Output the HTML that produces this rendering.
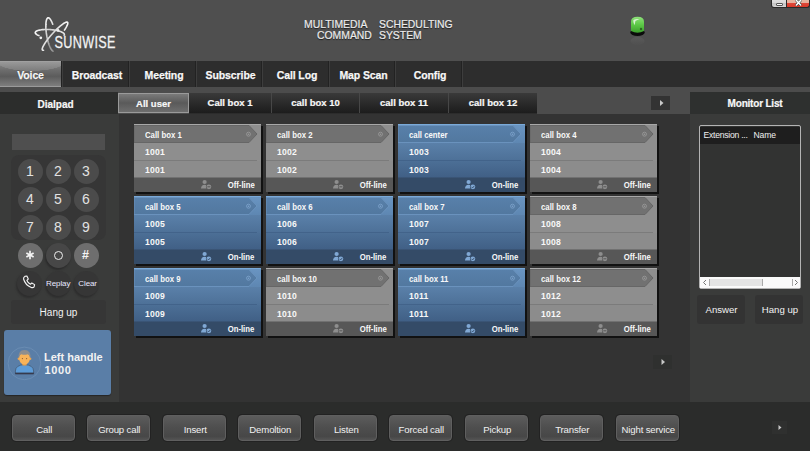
<!DOCTYPE html><html><head><meta charset="utf-8"><style>
*{margin:0;padding:0;box-sizing:border-box}
html,body{width:810px;height:451px;overflow:hidden;background:#333;font-family:"Liberation Sans",sans-serif;color:#f2f2f2}
.a{position:absolute}
#hdr{left:0;top:0;width:810px;height:61px;background:#4f4f4f}
#nav{left:0;top:61px;width:810px;height:26px;background:#2d2d2d;box-shadow:0 1px 0 #262626}
.tab{position:absolute;top:0;height:26px;font-size:10.5px;font-weight:bold;text-align:center;line-height:29px;padding-left:3px;color:#f8f8f8;letter-spacing:-0.1px;-webkit-text-stroke:0.25px #f8f8f8;text-shadow:0 0 1px #111}
.sep{position:absolute;top:0;width:2px;height:26px;border-left:1px solid #222;border-right:1px solid #3d3d3d}
#strip{left:0;top:87px;width:810px;height:5px;background:#4c4c4c}
#sub{left:0;top:92px;width:810px;height:22px;background:#4c4c4c}
#dialhdr{left:0;top:92px;width:118px;height:22px;background:#2c2d2c;font-size:10px;font-weight:bold;-webkit-text-stroke:0.2px #f8f8f8;color:#f8f8f8;text-align:center;line-height:25px;padding-right:7px}
#monhdr{left:690px;top:92px;width:120px;height:22px;background:#2e302f;font-size:10px;font-weight:bold;-webkit-text-stroke:0.2px #f8f8f8;color:#f8f8f8;text-align:center;line-height:24px;padding-left:10px;letter-spacing:-0.2px}
#left{left:0;top:114px;width:119px;height:288px;background:#3a3b3a}
#main{left:119px;top:114px;width:571px;height:288px;background:#333}
#right{left:690px;top:114px;width:120px;height:288px;background:#3a3b3a}
#bot{left:0;top:402px;width:810px;height:49px;background:#2b2c2b}
.stab{position:absolute;top:93px;height:20px;background:linear-gradient(#3a3a3a,#2f2f2f 35%,#262626 65%,#1d1d1d);font-size:9.5px;font-weight:bold;text-align:center;line-height:19px;-webkit-text-stroke:0.2px #f8f8f8;color:#f8f8f8}
.card{position:absolute;width:129px;height:70px}
.card .bd{position:absolute;left:0;top:0;width:127px;height:68px;box-shadow:2px 2px 0 #111}
.card svg{position:absolute;left:0;top:0}
.card .t{position:absolute;left:10.5px;font-size:8.4px;transform:scaleX(0.93);transform-origin:0 0;font-weight:bold;color:#f8f8f8;white-space:nowrap;}
.card .n{position:absolute;left:11px;font-size:8.6px;font-weight:bold;color:#f8f8f8;white-space:nowrap;letter-spacing:0.2px;}
.card .s{position:absolute;right:8.5px;top:56px;font-size:8.8px;transform:scaleX(0.88);transform-origin:100% 0;font-weight:bold;color:#f8f8f8;white-space:nowrap;}
.key{position:absolute;width:25px;height:25px;border-radius:50%;background:#4b4b4b;color:#e2e2e2;font-size:14px;text-align:center;line-height:24px}
.ttl{font-size:10.4px;color:#ececec;text-shadow:0 1px 1px #1a1a1a;white-space:nowrap;letter-spacing:0px;-webkit-text-stroke:0.2px #ececec}
.btn{position:absolute;top:415px;width:63px;height:26px;border-radius:4px;background:linear-gradient(#5c5c5c,#4f4f4f 45%,#474747 85%,#545454);border:1px solid #5f5f5f;font-size:9.6px;text-align:center;line-height:27.5px;color:#f0f0f0;box-shadow:0 0 0 1px #222;letter-spacing:-0.15px;padding-left:1.5px}
</style></head><body>
<div id="hdr" class="a"></div>
<svg class="a" style="left:0;top:0" width="130" height="60" viewBox="0 0 130 60">
<defs>
<linearGradient id="o1" gradientUnits="userSpaceOnUse" x1="46" y1="17" x2="60" y2="40"><stop offset="0" stop-color="#f6f6f6"/><stop offset="0.6" stop-color="#d0d0d0"/><stop offset="1" stop-color="#9a9a9a"/></linearGradient>
<linearGradient id="o2" gradientUnits="userSpaceOnUse" x1="35" y1="33" x2="64" y2="33"><stop offset="0" stop-color="#f8f8f8"/><stop offset="0.5" stop-color="#cfcfcf"/><stop offset="1" stop-color="#e8e8e8"/></linearGradient>
<linearGradient id="o3" gradientUnits="userSpaceOnUse" x1="68" y1="22" x2="42" y2="50"><stop offset="0" stop-color="#f8f8f8"/><stop offset="0.5" stop-color="#d8d8d8"/><stop offset="1" stop-color="#e8e8e8"/></linearGradient>
</defs>
<g fill="none" stroke-width="1.6" stroke-linecap="round">
<path d="M53.02,51.09 L52.64,50.88 L52.24,50.57 L51.84,50.15 L51.42,49.62 L51.01,48.99 L50.59,48.27 L50.18,47.45 L49.77,46.54 L49.36,45.55 L48.97,44.49 L48.59,43.36 L48.23,42.17 L47.89,40.93 L47.56,39.65 L47.26,38.33 L46.98,36.98 L46.73,35.62 L46.51,34.25 L46.31,32.89 L46.15,31.53 L46.02,30.19 L45.92,28.89 L45.86,27.62 L45.83,26.39 L45.83,25.22 L45.87,24.12 L45.94,23.08 L46.05,22.12 L46.18,21.25 L46.35,20.46 L46.55,19.77 L46.78,19.18 L47.04,18.69 L47.33,18.30 L47.63,18.03 L47.96,17.87 L48.31,17.82 L48.68,17.88 L49.06,18.05 L49.45,18.34 L49.86,18.73 L50.27,19.23 L50.69,19.83 L51.10,20.54 L51.52,21.33 L51.93,22.22 L52.33,23.18 L52.73,24.23" stroke="url(#o1)"/>
<path d="M38.95,35.57 L38.17,35.26 L37.48,34.94 L36.87,34.61 L36.35,34.27 L35.93,33.93 L35.60,33.58 L35.38,33.23 L35.26,32.89 L35.24,32.55 L35.32,32.22 L35.51,31.90 L35.80,31.59 L36.19,31.29 L36.67,31.01 L37.25,30.75 L37.91,30.51 L38.66,30.30 L39.49,30.10 L40.40,29.93 L41.36,29.79 L42.39,29.67 L43.47,29.58 L44.60,29.52 L45.76,29.49 L46.95,29.48 L48.17,29.51 L49.39,29.57 L50.61,29.65 L51.83,29.76 L53.04,29.90 L54.22,30.07 L55.38,30.26 L56.49,30.47 L57.55,30.71 L58.56,30.96 L59.51,31.24 L60.39,31.53 L61.19,31.84 L61.92,32.16 L62.55,32.49 L63.10,32.82 L63.55,33.17 L63.91,33.51 L64.16,33.86 L64.32,34.20 L64.37,34.54 L64.31,34.88 L64.16,35.20" stroke="url(#o2)"/>
<path d="M43.54,50.26 L43.07,50.30 L42.70,50.23 L42.43,50.04 L42.27,49.74 L42.20,49.33 L42.25,48.81 L42.39,48.19 L42.64,47.47 L43.00,46.66 L43.44,45.76 L43.99,44.78 L44.62,43.74 L45.34,42.63 L46.14,41.47 L47.01,40.27 L47.94,39.03 L48.94,37.77 L49.98,36.50 L51.06,35.22 L52.18,33.96 L53.32,32.71 L54.47,31.49 L55.63,30.31 L56.78,29.17 L57.91,28.10 L59.03,27.09 L60.11,26.15 L61.15,25.30 L62.14,24.53 L63.07,23.87 L63.93,23.30 L64.72,22.84 L65.43,22.48 L66.06,22.24 L66.60,22.12 L67.04,22.11 L67.38,22.21 L67.62,22.43 L67.76,22.76 L67.79,23.20 L67.72,23.75 L67.55,24.39 L67.27,25.14 L66.89,25.98 L66.42,26.89 L65.85,27.89 L65.19,28.95 L64.45,30.08" stroke="url(#o3)"/>
</g>
<circle cx="40.8" cy="37.8" r="1.4" fill="#f4f4f4"/><circle cx="58.1" cy="30.4" r="1.3" fill="#eee"/><circle cx="46" cy="24.6" r="1" fill="#ddd"/>
<g transform="translate(54.6 48) scale(0.8 1)"><text x="0" y="0" font-family="Liberation Sans" font-size="15.8" fill="#f4f4f4" stroke="#f4f4f4" stroke-width="0.25" textLength="76" lengthAdjust="spacing">SUNWISE</text></g>
</svg>
<div class="a ttl" style="left:304px;top:19.2px">MULTIMEDIA</div>
<div class="a ttl" style="left:379px;top:19.2px">SCHEDULTING</div>
<div class="a ttl" style="left:317px;top:30.2px">COMMAND</div>
<div class="a ttl" style="left:379px;top:30.2px">SYSTEM</div>
<svg class="a" style="left:626px;top:12px" width="24" height="36" viewBox="0 0 24 36">
<defs><linearGradient id="gl" x1="0" y1="0" x2="0" y2="1"><stop offset="0" stop-color="#8ee07a"/><stop offset="0.5" stop-color="#5cc846"/><stop offset="1" stop-color="#3c9e2c"/></linearGradient>
<linearGradient id="rf" x1="0" y1="0" x2="0" y2="1"><stop offset="0" stop-color="#5c5c5c"/><stop offset="1" stop-color="#505050"/></linearGradient></defs>
<ellipse cx="11.5" cy="20.5" rx="7.2" ry="3.4" fill="#0b0b0b"/>
<path d="M5,19 L5,9.5 Q5,4.8 11.5,4.8 Q18,4.8 18,9.5 L18,19 Q11.5,22.5 5,19 Z" fill="url(#gl)"/>
<path d="M7.2,8.6 Q8,7 11,7 L13.8,7.2 Q11,8 9.4,9 L8.6,13.2 Q7.4,11.2 7.2,8.6 Z" fill="#e6f5e0" opacity="0.9"/>
<circle cx="15" cy="17" r="1.2" fill="#2c6a22"/>
<ellipse cx="11.5" cy="29" rx="7" ry="4" fill="url(#rf)" opacity="0.8"/>
</svg>
<div class="a" style="left:771px;top:0;width:16px;height:8px;background:linear-gradient(#e0e0e0,#d8d8d8 45%,#c4c4c4 50%,#d6d6d6);border:1px solid #2a2a2a;border-top:0;border-radius:0 0 0 3px"></div>
<div class="a" style="left:775.5px;top:2.5px;width:7px;height:3px;background:#fafafa;border:1px solid #555;border-radius:1px"></div>
<div class="a" style="left:787px;top:0;width:23px;height:8px;background:linear-gradient(#e8b8a0,#e8b0a0 40%,#e04838 45%,#d83a2a);border:1px solid #2a2a2a;border-top:0;border-left:0;border-radius:0 0 3px 0"></div>
<svg class="a" style="left:787px;top:0" width="23" height="8"><path d="M9,0 L14,5.5 M14,0 L9,5.5" stroke="#1a3a3a" stroke-width="2.6"/><path d="M9,0 L14,5.5 M14,0 L9,5.5" stroke="#fff" stroke-width="1.6"/></svg>
<div id="nav" class="a">
<div class="tab" style="left:0px;width:62px;background:radial-gradient(34px 9px at 50% 0%,rgba(255,255,255,.12) 97%,transparent 100%),linear-gradient(#8a8a8a,#6c6c6c 35%,#5c5c5c 60%,#7e7e7e);border-top:1px solid #a0a0a0;border-bottom:1px solid #9a9a9a;line-height:27px;padding-left:0;padding-right:1px">Voice</div>
<div class="tab" style="left:62px;width:67px">Broadcast</div>
<div class="sep" style="left:61px"></div>
<div class="tab" style="left:129px;width:67px">Meeting</div>
<div class="sep" style="left:128px"></div>
<div class="tab" style="left:196px;width:66px">Subscribe</div>
<div class="sep" style="left:195px"></div>
<div class="tab" style="left:262px;width:67px">Call Log</div>
<div class="sep" style="left:261px"></div>
<div class="tab" style="left:329px;width:66px">Map Scan</div>
<div class="sep" style="left:328px"></div>
<div class="tab" style="left:395px;width:67px">Config</div>
<div class="sep" style="left:394px"></div>
<div class="sep" style="left:461px"></div>
</div>
<div id="strip" class="a"></div>
<div id="sub" class="a"></div>
<div id="dialhdr" class="a">Dialpad</div>
<div id="monhdr" class="a">Monitor List</div>
<div id="left" class="a"></div>
<div id="main" class="a"></div>
<div id="right" class="a"></div>
<div id="bot" class="a"></div>
<div class="stab" style="left:118px;width:71px;background:linear-gradient(#7a7a7a,#5a5a5a 50%,#6e6e6e);border:1px solid #9a9a9a">All user</div>
<div class="a" style="left:189px;top:93px;width:348px;height:21px;background:#2c2c2c"></div>
<div class="stab" style="left:189px;width:82px">Call box 1</div>
<div class="stab" style="left:272px;width:87px">call box 10</div>
<div class="stab" style="left:360px;width:88px">call box 11</div>
<div class="stab" style="left:449px;width:88px">call box 12</div>
<div class="a" style="left:271px;top:93px;width:1px;height:20px;background:#474747"></div>
<div class="a" style="left:359px;top:93px;width:1px;height:20px;background:#474747"></div>
<div class="a" style="left:448px;top:93px;width:1px;height:20px;background:#474747"></div>
<div class="a" style="left:651px;top:96px;width:19px;height:14px;background:#333"></div>
<svg class="a" style="left:651px;top:96px" width="19" height="14"><path d="M9,4 L12.5,7 L9,10 Z" fill="#c8c8c8"/></svg>
<svg width="0" height="0" style="position:absolute"><defs>
<linearGradient id="bh" x1="0" y1="0" x2="0" y2="1"><stop offset="0" stop-color="#6a95c2"/><stop offset="1" stop-color="#5e87b2"/></linearGradient>
<linearGradient id="ba" x1="0" y1="0" x2="0" y2="1"><stop offset="0" stop-color="#5880aa"/><stop offset="1" stop-color="#52789f"/></linearGradient>
<linearGradient id="br1" x1="0" y1="0" x2="0" y2="1"><stop offset="0" stop-color="#5a80a9"/><stop offset="1" stop-color="#4d7097"/></linearGradient>
<linearGradient id="br2" x1="0" y1="0" x2="0" y2="1"><stop offset="0" stop-color="#4c6f96"/><stop offset="1" stop-color="#405f85"/></linearGradient>
</defs></svg>
<div class="card" style="left:134px;top:124px">
<div class="bd"></div>
<svg width="127" height="68" viewBox="0 0 127 68"><rect x="0" y="0" width="127" height="19" fill="#8e8e8e"/><rect x="0" y="19" width="127" height="18" fill="#8e8e8e"/><rect x="0" y="37" width="127" height="17" fill="#8c8c8c"/><rect x="0" y="0" width="127" height="1" fill="#a8a8a8"/><polygon points="0,1.5 115,1.5 123,10 115,18.5 0,18.5" fill="#717171" stroke="#666666" stroke-width="1"/><circle cx="114.5" cy="10.2" r="2" fill="none" stroke="#9a9a9a" stroke-width="0.8"/><circle cx="114.5" cy="10.2" r="0.8" fill="#9a9a9a"/><rect x="0" y="36" width="123" height="1" fill="#7b7b7b"/><rect x="0" y="53.5" width="127" height="14.5" fill="#575757"/><circle cx="70.6" cy="58" r="2.1" fill="#8e8e8e"/><path d="M67,64.6 Q67.2,60.8 70.6,60.8 Q73.4,60.8 74,62.5 L74,64.6 Z" fill="#8e8e8e"/><circle cx="74.9" cy="62.8" r="3" fill="#575757"/><circle cx="74.9" cy="62.8" r="2.4" fill="#8e8e8e"/><rect x="73.4" y="62.3" width="3" height="1" fill="#575757"/></svg>
<div class="t" style="top:5.5px">Call box 1</div>
<div class="n" style="top:23px">1001</div>
<div class="n" style="top:40.5px">1001</div>
<div class="s">Off-line</div>
</div>
<div class="card" style="left:266px;top:124px">
<div class="bd"></div>
<svg width="127" height="68" viewBox="0 0 127 68"><rect x="0" y="0" width="127" height="19" fill="#8e8e8e"/><rect x="0" y="19" width="127" height="18" fill="#8e8e8e"/><rect x="0" y="37" width="127" height="17" fill="#8c8c8c"/><rect x="0" y="0" width="127" height="1" fill="#a8a8a8"/><polygon points="0,1.5 115,1.5 123,10 115,18.5 0,18.5" fill="#717171" stroke="#666666" stroke-width="1"/><circle cx="114.5" cy="10.2" r="2" fill="none" stroke="#9a9a9a" stroke-width="0.8"/><circle cx="114.5" cy="10.2" r="0.8" fill="#9a9a9a"/><rect x="0" y="36" width="123" height="1" fill="#7b7b7b"/><rect x="0" y="53.5" width="127" height="14.5" fill="#575757"/><circle cx="70.6" cy="58" r="2.1" fill="#8e8e8e"/><path d="M67,64.6 Q67.2,60.8 70.6,60.8 Q73.4,60.8 74,62.5 L74,64.6 Z" fill="#8e8e8e"/><circle cx="74.9" cy="62.8" r="3" fill="#575757"/><circle cx="74.9" cy="62.8" r="2.4" fill="#8e8e8e"/><rect x="73.4" y="62.3" width="3" height="1" fill="#575757"/></svg>
<div class="t" style="top:5.5px">call box 2</div>
<div class="n" style="top:23px">1002</div>
<div class="n" style="top:40.5px">1002</div>
<div class="s">Off-line</div>
</div>
<div class="card" style="left:398px;top:124px">
<div class="bd"></div>
<svg width="127" height="68" viewBox="0 0 127 68"><rect x="0" y="0" width="127" height="19" fill="url(#bh)"/><rect x="0" y="19" width="127" height="18" fill="url(#br1)"/><rect x="0" y="37" width="127" height="17" fill="url(#br2)"/><rect x="0" y="0" width="127" height="1" fill="#7aaad9"/><polygon points="0,1.5 115,1.5 123,10 115,18.5 0,18.5" fill="url(#ba)" stroke="#6a92bd" stroke-width="1"/><circle cx="114.5" cy="10.2" r="2" fill="none" stroke="#7ea3cc" stroke-width="0.8"/><circle cx="114.5" cy="10.2" r="0.8" fill="#7ea3cc"/><rect x="0" y="36" width="123" height="1" fill="#42638a"/><rect x="0" y="53.5" width="127" height="14.5" fill="#344b67"/><circle cx="70.6" cy="58" r="2.1" fill="#80a8d4"/><path d="M67,64.6 Q67.2,60.8 70.6,60.8 Q73.4,60.8 74,62.5 L74,64.6 Z" fill="#80a8d4"/><circle cx="74.9" cy="62.8" r="3" fill="#344b67"/><circle cx="74.9" cy="62.8" r="2.4" fill="#80a8d4"/><path d="M73.5,62.8 L74.6,63.9 L76.4,61.8" fill="none" stroke="#344b67" stroke-width="0.9"/></svg>
<div class="t" style="top:5.5px">call center</div>
<div class="n" style="top:23px">1003</div>
<div class="n" style="top:40.5px">1003</div>
<div class="s">On-line</div>
</div>
<div class="card" style="left:530px;top:124px">
<div class="bd"></div>
<svg width="127" height="68" viewBox="0 0 127 68"><rect x="0" y="0" width="127" height="19" fill="#8e8e8e"/><rect x="0" y="19" width="127" height="18" fill="#8e8e8e"/><rect x="0" y="37" width="127" height="17" fill="#8c8c8c"/><rect x="0" y="0" width="127" height="1" fill="#a8a8a8"/><polygon points="0,1.5 115,1.5 123,10 115,18.5 0,18.5" fill="#717171" stroke="#666666" stroke-width="1"/><circle cx="114.5" cy="10.2" r="2" fill="none" stroke="#9a9a9a" stroke-width="0.8"/><circle cx="114.5" cy="10.2" r="0.8" fill="#9a9a9a"/><rect x="0" y="36" width="123" height="1" fill="#7b7b7b"/><rect x="0" y="53.5" width="127" height="14.5" fill="#575757"/><circle cx="70.6" cy="58" r="2.1" fill="#8e8e8e"/><path d="M67,64.6 Q67.2,60.8 70.6,60.8 Q73.4,60.8 74,62.5 L74,64.6 Z" fill="#8e8e8e"/><circle cx="74.9" cy="62.8" r="3" fill="#575757"/><circle cx="74.9" cy="62.8" r="2.4" fill="#8e8e8e"/><rect x="73.4" y="62.3" width="3" height="1" fill="#575757"/></svg>
<div class="t" style="top:5.5px">call box 4</div>
<div class="n" style="top:23px">1004</div>
<div class="n" style="top:40.5px">1004</div>
<div class="s">Off-line</div>
</div>
<div class="card" style="left:134px;top:196px">
<div class="bd"></div>
<svg width="127" height="68" viewBox="0 0 127 68"><rect x="0" y="0" width="127" height="19" fill="url(#bh)"/><rect x="0" y="19" width="127" height="18" fill="url(#br1)"/><rect x="0" y="37" width="127" height="17" fill="url(#br2)"/><rect x="0" y="0" width="127" height="1" fill="#7aaad9"/><polygon points="0,1.5 115,1.5 123,10 115,18.5 0,18.5" fill="url(#ba)" stroke="#6a92bd" stroke-width="1"/><circle cx="114.5" cy="10.2" r="2" fill="none" stroke="#7ea3cc" stroke-width="0.8"/><circle cx="114.5" cy="10.2" r="0.8" fill="#7ea3cc"/><rect x="0" y="36" width="123" height="1" fill="#42638a"/><rect x="0" y="53.5" width="127" height="14.5" fill="#344b67"/><circle cx="70.6" cy="58" r="2.1" fill="#80a8d4"/><path d="M67,64.6 Q67.2,60.8 70.6,60.8 Q73.4,60.8 74,62.5 L74,64.6 Z" fill="#80a8d4"/><circle cx="74.9" cy="62.8" r="3" fill="#344b67"/><circle cx="74.9" cy="62.8" r="2.4" fill="#80a8d4"/><path d="M73.5,62.8 L74.6,63.9 L76.4,61.8" fill="none" stroke="#344b67" stroke-width="0.9"/></svg>
<div class="t" style="top:5.5px">call box 5</div>
<div class="n" style="top:23px">1005</div>
<div class="n" style="top:40.5px">1005</div>
<div class="s">On-line</div>
</div>
<div class="card" style="left:266px;top:196px">
<div class="bd"></div>
<svg width="127" height="68" viewBox="0 0 127 68"><rect x="0" y="0" width="127" height="19" fill="url(#bh)"/><rect x="0" y="19" width="127" height="18" fill="url(#br1)"/><rect x="0" y="37" width="127" height="17" fill="url(#br2)"/><rect x="0" y="0" width="127" height="1" fill="#7aaad9"/><polygon points="0,1.5 115,1.5 123,10 115,18.5 0,18.5" fill="url(#ba)" stroke="#6a92bd" stroke-width="1"/><circle cx="114.5" cy="10.2" r="2" fill="none" stroke="#7ea3cc" stroke-width="0.8"/><circle cx="114.5" cy="10.2" r="0.8" fill="#7ea3cc"/><rect x="0" y="36" width="123" height="1" fill="#42638a"/><rect x="0" y="53.5" width="127" height="14.5" fill="#344b67"/><circle cx="70.6" cy="58" r="2.1" fill="#80a8d4"/><path d="M67,64.6 Q67.2,60.8 70.6,60.8 Q73.4,60.8 74,62.5 L74,64.6 Z" fill="#80a8d4"/><circle cx="74.9" cy="62.8" r="3" fill="#344b67"/><circle cx="74.9" cy="62.8" r="2.4" fill="#80a8d4"/><path d="M73.5,62.8 L74.6,63.9 L76.4,61.8" fill="none" stroke="#344b67" stroke-width="0.9"/></svg>
<div class="t" style="top:5.5px">call box 6</div>
<div class="n" style="top:23px">1006</div>
<div class="n" style="top:40.5px">1006</div>
<div class="s">On-line</div>
</div>
<div class="card" style="left:398px;top:196px">
<div class="bd"></div>
<svg width="127" height="68" viewBox="0 0 127 68"><rect x="0" y="0" width="127" height="19" fill="url(#bh)"/><rect x="0" y="19" width="127" height="18" fill="url(#br1)"/><rect x="0" y="37" width="127" height="17" fill="url(#br2)"/><rect x="0" y="0" width="127" height="1" fill="#7aaad9"/><polygon points="0,1.5 115,1.5 123,10 115,18.5 0,18.5" fill="url(#ba)" stroke="#6a92bd" stroke-width="1"/><circle cx="114.5" cy="10.2" r="2" fill="none" stroke="#7ea3cc" stroke-width="0.8"/><circle cx="114.5" cy="10.2" r="0.8" fill="#7ea3cc"/><rect x="0" y="36" width="123" height="1" fill="#42638a"/><rect x="0" y="53.5" width="127" height="14.5" fill="#344b67"/><circle cx="70.6" cy="58" r="2.1" fill="#80a8d4"/><path d="M67,64.6 Q67.2,60.8 70.6,60.8 Q73.4,60.8 74,62.5 L74,64.6 Z" fill="#80a8d4"/><circle cx="74.9" cy="62.8" r="3" fill="#344b67"/><circle cx="74.9" cy="62.8" r="2.4" fill="#80a8d4"/><path d="M73.5,62.8 L74.6,63.9 L76.4,61.8" fill="none" stroke="#344b67" stroke-width="0.9"/></svg>
<div class="t" style="top:5.5px">call box 7</div>
<div class="n" style="top:23px">1007</div>
<div class="n" style="top:40.5px">1007</div>
<div class="s">On-line</div>
</div>
<div class="card" style="left:530px;top:196px">
<div class="bd"></div>
<svg width="127" height="68" viewBox="0 0 127 68"><rect x="0" y="0" width="127" height="19" fill="#8e8e8e"/><rect x="0" y="19" width="127" height="18" fill="#8e8e8e"/><rect x="0" y="37" width="127" height="17" fill="#8c8c8c"/><rect x="0" y="0" width="127" height="1" fill="#a8a8a8"/><polygon points="0,1.5 115,1.5 123,10 115,18.5 0,18.5" fill="#717171" stroke="#666666" stroke-width="1"/><circle cx="114.5" cy="10.2" r="2" fill="none" stroke="#9a9a9a" stroke-width="0.8"/><circle cx="114.5" cy="10.2" r="0.8" fill="#9a9a9a"/><rect x="0" y="36" width="123" height="1" fill="#7b7b7b"/><rect x="0" y="53.5" width="127" height="14.5" fill="#575757"/><circle cx="70.6" cy="58" r="2.1" fill="#8e8e8e"/><path d="M67,64.6 Q67.2,60.8 70.6,60.8 Q73.4,60.8 74,62.5 L74,64.6 Z" fill="#8e8e8e"/><circle cx="74.9" cy="62.8" r="3" fill="#575757"/><circle cx="74.9" cy="62.8" r="2.4" fill="#8e8e8e"/><rect x="73.4" y="62.3" width="3" height="1" fill="#575757"/></svg>
<div class="t" style="top:5.5px">call box 8</div>
<div class="n" style="top:23px">1008</div>
<div class="n" style="top:40.5px">1008</div>
<div class="s">Off-line</div>
</div>
<div class="card" style="left:134px;top:268px">
<div class="bd"></div>
<svg width="127" height="68" viewBox="0 0 127 68"><rect x="0" y="0" width="127" height="19" fill="url(#bh)"/><rect x="0" y="19" width="127" height="18" fill="url(#br1)"/><rect x="0" y="37" width="127" height="17" fill="url(#br2)"/><rect x="0" y="0" width="127" height="1" fill="#7aaad9"/><polygon points="0,1.5 115,1.5 123,10 115,18.5 0,18.5" fill="url(#ba)" stroke="#6a92bd" stroke-width="1"/><circle cx="114.5" cy="10.2" r="2" fill="none" stroke="#7ea3cc" stroke-width="0.8"/><circle cx="114.5" cy="10.2" r="0.8" fill="#7ea3cc"/><rect x="0" y="36" width="123" height="1" fill="#42638a"/><rect x="0" y="53.5" width="127" height="14.5" fill="#344b67"/><circle cx="70.6" cy="58" r="2.1" fill="#80a8d4"/><path d="M67,64.6 Q67.2,60.8 70.6,60.8 Q73.4,60.8 74,62.5 L74,64.6 Z" fill="#80a8d4"/><circle cx="74.9" cy="62.8" r="3" fill="#344b67"/><circle cx="74.9" cy="62.8" r="2.4" fill="#80a8d4"/><path d="M73.5,62.8 L74.6,63.9 L76.4,61.8" fill="none" stroke="#344b67" stroke-width="0.9"/></svg>
<div class="t" style="top:5.5px">call box 9</div>
<div class="n" style="top:23px">1009</div>
<div class="n" style="top:40.5px">1009</div>
<div class="s">On-line</div>
</div>
<div class="card" style="left:266px;top:268px">
<div class="bd"></div>
<svg width="127" height="68" viewBox="0 0 127 68"><rect x="0" y="0" width="127" height="19" fill="#8e8e8e"/><rect x="0" y="19" width="127" height="18" fill="#8e8e8e"/><rect x="0" y="37" width="127" height="17" fill="#8c8c8c"/><rect x="0" y="0" width="127" height="1" fill="#a8a8a8"/><polygon points="0,1.5 115,1.5 123,10 115,18.5 0,18.5" fill="#717171" stroke="#666666" stroke-width="1"/><circle cx="114.5" cy="10.2" r="2" fill="none" stroke="#9a9a9a" stroke-width="0.8"/><circle cx="114.5" cy="10.2" r="0.8" fill="#9a9a9a"/><rect x="0" y="36" width="123" height="1" fill="#7b7b7b"/><rect x="0" y="53.5" width="127" height="14.5" fill="#575757"/><circle cx="70.6" cy="58" r="2.1" fill="#8e8e8e"/><path d="M67,64.6 Q67.2,60.8 70.6,60.8 Q73.4,60.8 74,62.5 L74,64.6 Z" fill="#8e8e8e"/><circle cx="74.9" cy="62.8" r="3" fill="#575757"/><circle cx="74.9" cy="62.8" r="2.4" fill="#8e8e8e"/><rect x="73.4" y="62.3" width="3" height="1" fill="#575757"/></svg>
<div class="t" style="top:5.5px">call box 10</div>
<div class="n" style="top:23px">1010</div>
<div class="n" style="top:40.5px">1010</div>
<div class="s">Off-line</div>
</div>
<div class="card" style="left:398px;top:268px">
<div class="bd"></div>
<svg width="127" height="68" viewBox="0 0 127 68"><rect x="0" y="0" width="127" height="19" fill="url(#bh)"/><rect x="0" y="19" width="127" height="18" fill="url(#br1)"/><rect x="0" y="37" width="127" height="17" fill="url(#br2)"/><rect x="0" y="0" width="127" height="1" fill="#7aaad9"/><polygon points="0,1.5 115,1.5 123,10 115,18.5 0,18.5" fill="url(#ba)" stroke="#6a92bd" stroke-width="1"/><circle cx="114.5" cy="10.2" r="2" fill="none" stroke="#7ea3cc" stroke-width="0.8"/><circle cx="114.5" cy="10.2" r="0.8" fill="#7ea3cc"/><rect x="0" y="36" width="123" height="1" fill="#42638a"/><rect x="0" y="53.5" width="127" height="14.5" fill="#344b67"/><circle cx="70.6" cy="58" r="2.1" fill="#80a8d4"/><path d="M67,64.6 Q67.2,60.8 70.6,60.8 Q73.4,60.8 74,62.5 L74,64.6 Z" fill="#80a8d4"/><circle cx="74.9" cy="62.8" r="3" fill="#344b67"/><circle cx="74.9" cy="62.8" r="2.4" fill="#80a8d4"/><path d="M73.5,62.8 L74.6,63.9 L76.4,61.8" fill="none" stroke="#344b67" stroke-width="0.9"/></svg>
<div class="t" style="top:5.5px">call box 11</div>
<div class="n" style="top:23px">1011</div>
<div class="n" style="top:40.5px">1011</div>
<div class="s">On-line</div>
</div>
<div class="card" style="left:530px;top:268px">
<div class="bd"></div>
<svg width="127" height="68" viewBox="0 0 127 68"><rect x="0" y="0" width="127" height="19" fill="#8e8e8e"/><rect x="0" y="19" width="127" height="18" fill="#8e8e8e"/><rect x="0" y="37" width="127" height="17" fill="#8c8c8c"/><rect x="0" y="0" width="127" height="1" fill="#a8a8a8"/><polygon points="0,1.5 115,1.5 123,10 115,18.5 0,18.5" fill="#717171" stroke="#666666" stroke-width="1"/><circle cx="114.5" cy="10.2" r="2" fill="none" stroke="#9a9a9a" stroke-width="0.8"/><circle cx="114.5" cy="10.2" r="0.8" fill="#9a9a9a"/><rect x="0" y="36" width="123" height="1" fill="#7b7b7b"/><rect x="0" y="53.5" width="127" height="14.5" fill="#575757"/><circle cx="70.6" cy="58" r="2.1" fill="#8e8e8e"/><path d="M67,64.6 Q67.2,60.8 70.6,60.8 Q73.4,60.8 74,62.5 L74,64.6 Z" fill="#8e8e8e"/><circle cx="74.9" cy="62.8" r="3" fill="#575757"/><circle cx="74.9" cy="62.8" r="2.4" fill="#8e8e8e"/><rect x="73.4" y="62.3" width="3" height="1" fill="#575757"/></svg>
<div class="t" style="top:5.5px">call box 12</div>
<div class="n" style="top:23px">1012</div>
<div class="n" style="top:40.5px">1012</div>
<div class="s">Off-line</div>
</div>
<div class="a" style="left:653px;top:355px;width:19px;height:14px;background:#2f302f"></div>
<svg class="a" style="left:653px;top:355px" width="19" height="14"><path d="M8.5,4 L12,7 L8.5,10 Z" fill="#c8c8c8"/></svg>
<div class="a" style="left:12px;top:134px;width:93px;height:16px;background:#4f4f4f"></div>
<div class="a" style="left:11px;top:155px;width:95px;height:85px;background:#363636;border-radius:8px"></div>
<div class="key" style="left:17.5px;top:158.5px">1</div>
<div class="key" style="left:45.5px;top:158.5px">2</div>
<div class="key" style="left:73.5px;top:158.5px">3</div>
<div class="key" style="left:17.5px;top:186.5px">4</div>
<div class="key" style="left:45.5px;top:186.5px">5</div>
<div class="key" style="left:73.5px;top:186.5px">6</div>
<div class="key" style="left:17.5px;top:214.5px">7</div>
<div class="key" style="left:45.5px;top:214.5px">8</div>
<div class="key" style="left:73.5px;top:214.5px">9</div>
<div class="key" style="left:17.5px;top:242.5px;background:#6e6e6e"></div>
<svg class="a" style="left:25px;top:250.3px" width="10" height="10" viewBox="0 0 10 10"><g stroke="#f4f4f4" stroke-width="1.7" stroke-linecap="butt"><path d="M5,0.8 L5,9.2"/><path d="M1.36,2.9 L8.64,7.1"/><path d="M1.36,7.1 L8.64,2.9"/></g></svg>
<div class="key" style="left:45.5px;top:242.5px;background:#474747;box-shadow:-1px 2px 2px #2c2c2c"></div>
<div class="a" style="left:53.8px;top:250.5px;width:9px;height:9px;border:1.4px solid #eee;border-radius:50%"></div>
<div class="key" style="left:73.5px;top:242.5px;background:#6e6e6e"></div>
<div class="a" style="left:82px;top:248px;font-size:12.5px;font-weight:bold;color:#f4f4f4;line-height:14px">#</div>
<div class="key" style="left:16.5px;top:270.5px;background:#363636;box-shadow:-1px 2px 2px #2e2e2e"></div>
<div class="key" style="left:45.5px;top:270.5px;background:#363636;box-shadow:-1px 2px 2px #2e2e2e"></div>
<div class="key" style="left:74.0px;top:270.5px;background:#363636;box-shadow:-1px 2px 2px #2e2e2e"></div>
<svg class="a" style="left:21.6px;top:275px" width="14" height="14" viewBox="0 0 16 16"><path d="M3.2,1.6 L5.6,1.2 L7.2,4.6 L5.6,6.2 Q6.8,9 9.6,10.6 L11.2,9.2 L14.4,11 L13.8,13.6 Q12.6,15 10.6,14.2 Q3.8,11.6 1.8,4.6 Q1.6,2.4 3.2,1.6 Z" fill="none" stroke="#f4f4f4" stroke-width="1.3" stroke-linejoin="round"/></svg>
<div class="a" style="left:46px;top:279px;font-size:8px;color:#e8e8ff;line-height:10px;letter-spacing:-0.1px">Replay</div>
<div class="a" style="left:78.3px;top:279px;font-size:8px;color:#e8e8ff;line-height:10px;letter-spacing:-0.1px">Clear</div>
<div class="a" style="left:11px;top:300px;width:95px;height:24px;background:#363636;border-radius:3px;font-size:10px;text-align:center;line-height:26px">Hang up</div>
<div class="a" style="left:4px;top:330px;width:107px;height:65px;background:#5a7ea7;border-radius:3px;box-shadow:0 1px 1px #262626"></div>
<div class="a" style="left:44px;top:351px;font-size:11px;font-weight:bold;line-height:13px">Left handle<br><span style="letter-spacing:0.6px;margin-left:0.5px">1000</span></div>
<svg class="a" style="left:7px;top:346px" width="36" height="36" viewBox="0 0 36 36">
<circle cx="17.4" cy="17.4" r="16.3" fill="none" stroke="#6d8fb5" stroke-width="0.8"/>
<path d="M8.4,27.8 L8.4,25 Q8.6,19 17.5,18.6 Q26.4,19 26.6,25 L26.6,27.8 Z" fill="#5d9cd8" stroke="#44546a" stroke-width="0.7"/>
<rect x="8.2" y="26.6" width="18.6" height="1.6" fill="#363a4c"/>
<rect x="15.4" y="15.5" width="4.2" height="4" fill="#e59a42"/>
<circle cx="11.9" cy="12.8" r="1.3" fill="#eea44e"/><circle cx="23.1" cy="12.8" r="1.3" fill="#eea44e"/>
<ellipse cx="17.5" cy="12.2" rx="5.4" ry="6.3" fill="#f7b35a"/>
<path d="M11.6,12.6 Q10.8,4 17.5,4 Q24.2,4 23.4,12.6 Q22.8,8.6 20.6,8.2 Q17.5,9.4 14.4,8.2 Q12.2,8.6 11.6,12.6 Z" fill="#8e8e8e"/>
<circle cx="15.4" cy="12.6" r="0.6" fill="#8a5a30"/><circle cx="19.6" cy="12.6" r="0.6" fill="#8a5a30"/>
</svg>
<div class="a" style="left:699px;top:125px;width:102px;height:164px;border:1px solid #b4b4b4;border-radius:2px;background:#323332"></div>
<div class="a" style="left:700px;top:127px;width:100px;height:17px;background:#1e1e1e"></div>
<div class="a" style="left:703.5px;top:130px;font-size:8.6px;line-height:10px;letter-spacing:-0.25px;color:#f0f0f0">Extension ...</div>
<div class="a" style="left:753.5px;top:130px;font-size:8.6px;line-height:10px;letter-spacing:-0.1px;color:#f0f0f0">Name</div>
<div class="a" style="left:700px;top:277px;width:100px;height:11px;background:#fafafa"></div>
<div class="a" style="left:709px;top:279px;width:54px;height:7px;background:#e4e4e4;border-left:1px solid #aaa;border-right:1px solid #aaa"></div>
<div class="a" style="left:792px;top:279px;width:1px;height:7px;background:#aaa"></div>
<svg class="a" style="left:700px;top:277px" width="100" height="11"><path d="M6,3 L3.5,5.5 L6,8" fill="none" stroke="#777" stroke-width="1"/><path d="M95,3 L97.5,5.5 L95,8" fill="none" stroke="#777" stroke-width="1"/></svg>
<div class="a" style="left:697px;top:295px;width:48px;height:29px;background:#333;border-radius:3px;font-size:9.6px;text-align:center;line-height:29px;padding-left:1px">Answer</div>
<div class="a" style="left:755px;top:295px;width:48px;height:29px;background:#333;border-radius:3px;font-size:9.6px;text-align:center;line-height:29px;padding-left:2px">Hang up</div>
<div class="btn" style="left:12px">Call</div>
<div class="btn" style="left:87px">Group call</div>
<div class="btn" style="left:163px">Insert</div>
<div class="btn" style="left:238px">Demoltion</div>
<div class="btn" style="left:314px">Listen</div>
<div class="btn" style="left:389px">Forced call</div>
<div class="btn" style="left:465px">Pickup</div>
<div class="btn" style="left:540px">Transfer</div>
<div class="btn" style="left:616px">Night service</div>
<div class="a" style="left:772px;top:421px;width:15px;height:13px;background:#2f302f"></div>
<svg class="a" style="left:772px;top:421px" width="15" height="13"><path d="M6.5,4 L9.5,6.5 L6.5,9 Z" fill="#c8c8c8"/></svg>
</body></html>
